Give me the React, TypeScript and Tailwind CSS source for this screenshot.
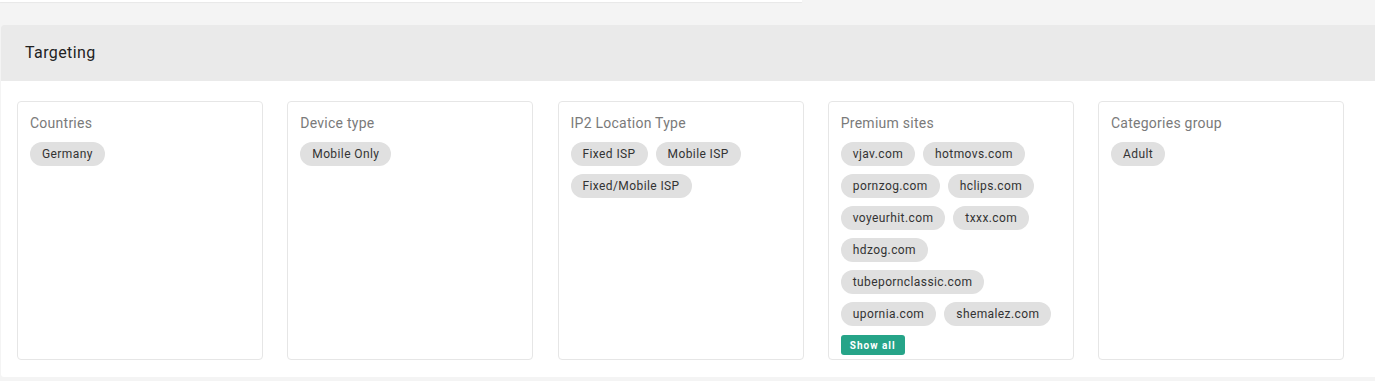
import React from "react";

const Chip = ({ children }: { children: React.ReactNode }) => (
  <span className="inline-flex h-6 items-center rounded-full bg-[#e0e0e0] px-3 text-[12px] tracking-[0.4px] text-[#333] leading-none">
    {children}
  </span>
);

const Card = ({ title, items, showAll }: { title: string; items: string[]; showAll?: boolean }) => (
  <div className="h-[259px] w-[246px] shrink-0 rounded-[4px] border border-[#e6e6e6] bg-white px-[12px] pt-[11px]">
    <div className="text-[14px] leading-[20px] tracking-[0.25px] text-[#7a7a7a]">{title}</div>
    <div className="mt-[9px] flex flex-wrap gap-x-2 gap-y-2">
      {items.map((i) => (
        <Chip key={i}>{i}</Chip>
      ))}
    </div>
    {showAll && (
      <button className="mt-[9px] flex h-5 items-center rounded-[3px] bg-[#26a488] px-[9px] text-[10px] font-bold tracking-[1px] text-white">
        Show all
      </button>
    )}
  </div>
);

export default function App() {
  return (
    <div className="h-[381px] w-[1375px] overflow-hidden bg-[#f4f4f4]" style={{ fontFamily: "Roboto, 'Liberation Sans', sans-serif" }}>
      <div className="h-[2px] w-[802px] bg-white shadow-[0_1px_1px_rgba(0,0,0,0.05)]" />
      <div className="ml-[1px] mt-[23px] w-[1390px] overflow-hidden rounded-[3px] bg-white">
        <div className="flex h-[56px] items-center bg-[#eaeaea] pl-[24px] text-[16px] tracking-[0.4px] text-[#222]">Targeting</div>
        <div className="flex gap-[24.25px] pb-[17px] pl-[16px] pt-[20px]">
          <Card title="Countries" items={["Germany"]} />
          <Card title="Device type" items={["Mobile Only"]} />
          <Card title="IP2 Location Type" items={["Fixed ISP", "Mobile ISP", "Fixed/Mobile ISP"]} />
          <Card
            title="Premium sites"
            items={[
              "vjav.com",
              "hotmovs.com",
              "pornzog.com",
              "hclips.com",
              "voyeurhit.com",
              "txxx.com",
              "hdzog.com",
              "tubepornclassic.com",
              "upornia.com",
              "shemalez.com",
            ]}
            showAll
          />
          <Card title="Categories group" items={["Adult"]} />
        </div>
      </div>
    </div>
  );
}
